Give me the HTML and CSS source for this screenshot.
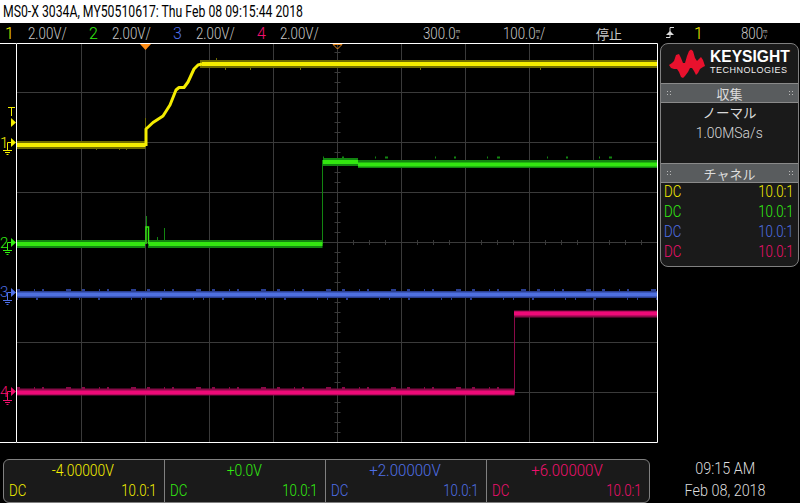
FILE: index.html
```html
<!DOCTYPE html>
<html lang="ja">
<head>
<meta charset="utf-8">
<title>MSO-X 3034A</title>
<link rel="stylesheet" href="styles.css">
</head>
<body>
<div class="screen">
  <header class="title"><span class="c cl title-text">MS0-X 3034A, MY50510617: Thu Feb 08 09:15:44 2018</span></header>

  <div class="status">
    <div class="ch-scale"><span class="num yellow">1</span><span class="val c cl">2.00V/</span></div>
    <div class="ch-scale"><span class="num green">2</span><span class="val c cl">2.00V/</span></div>
    <div class="ch-scale"><span class="num blue">3</span><span class="val c cl">2.00V/</span></div>
    <div class="ch-scale"><span class="num pink">4</span><span class="val c cl">2.00V/</span></div>
    <div class="time-delay"><span class="c cl">300.0<span class="stack"><i>m</i><i>s</i></span></span></div>
    <div class="time-scale"><span class="c cl">100.0<span class="stack"><i>m</i><i>s</i></span>/</span></div>
    <div class="run-state">停止</div>
    <svg class="edge" width="10" height="12" viewBox="0 0 10 12"><path class="edge-line" d="M9 0.500H5V10.500H1"/><path class="edge-head" d="M1 8H9L5 4Z"/></svg>
    <div class="trig-src yellow">1</div>
    <div class="trig-level"><span class="c cl">800<span class="stack"><i>m</i><i>V</i></span></span></div>
  </div>

  <div class="middle">
    <svg class="scope" width="658" height="400" viewBox="0 43 658 400">
      <path class="grid" d="M81.500 43V442M145.500 43V442M209.500 43V442M273.500 43V442M337.500 43V442M401.500 43V442M465.500 43V442M529.500 43V442M593.500 43V442M17 92.500H657M17 142.500H657M17 192.500H657M17 242.500H657M17 292.500H657M17 342.500H657M17 392.500H657"/>
      <path class="grid" d="M334.500 52.500h6M334.500 62.500h6M334.500 72.500h6M334.500 82.500h6M334.500 102.500h6M334.500 112.500h6M334.500 122.500h6M334.500 132.500h6M334.500 152.500h6M334.500 162.500h6M334.500 172.500h6M334.500 182.500h6M334.500 202.500h6M334.500 212.500h6M334.500 222.500h6M334.500 232.500h6M334.500 252.500h6M334.500 262.500h6M334.500 272.500h6M334.500 282.500h6M334.500 302.500h6M334.500 312.500h6M334.500 322.500h6M334.500 332.500h6M334.500 352.500h6M334.500 362.500h6M334.500 372.500h6M334.500 382.500h6M334.500 402.500h6M334.500 412.500h6M334.500 422.500h6M334.500 432.500h6"/>
      <path class="grid" d="M33.500 240v5M49.500 240v5M65.500 240v5M97.500 240v5M113.500 240v5M129.500 240v5M161.500 240v5M177.500 240v5M193.500 240v5M225.500 240v5M241.500 240v5M257.500 240v5M289.500 240v5M305.500 240v5M321.500 240v5M353.500 240v5M369.500 240v5M385.500 240v5M417.500 240v5M433.500 240v5M449.500 240v5M481.500 240v5M497.500 240v5M513.500 240v5M545.500 240v5M561.500 240v5M577.500 240v5M609.500 240v5M625.500 240v5M641.500 240v5"/>

      <!-- channel 1 -->
      <path class="dim-y band" d="M17 145H145.500M200 64H657"/>
      <path class="dim-y spike" d="M96.500 148v2M119.500 148v2M126.500 148v2M145.500 118v14M216.500 58v3M225.500 68v2M250.500 68v2M300.500 68v2M420.500 68v2M540.500 68v2"/>
      <path class="tr-y rise" d="M146 146V129L153 122.500L163 116L170 105L176 90L179 87.500H184L188 82L194 69L198 65L202 64"/>
      <path class="tr-y line" d="M17 145H145.500M202 64H657"/>

      <!-- channel 2 -->
      <path class="dim-g band-g" d="M17 244H145M148 244H322.500M323 162H358M358 164H657"/>
      <path class="dim-g thin" d="M322.500 160V244"/>
      <path class="dim-g noise-g" d="M323 157.500H657"/>
      <path class="dim-g spike" d="M146.500 216v14M164.500 228v12M157.500 237v4"/>
      <path class="tr-g thin-bright" d="M148.500 244V227H146V244"/>
      <path class="tr-g line" d="M17 244H145M149 244H322.500M323 162H358M358 164.500H657"/>

      <!-- channel 3 -->
      <path class="dim-b band-b" d="M17 294.500H657"/>
      <path class="dim-b noise" d="M17 290H657"/>
      <path class="dim-b noise2" d="M17 299H657"/>
      <path class="tr-b line" d="M17 294.500H657"/>

      <!-- channel 4 -->
      <path class="dim-p band-b" d="M17 392H514.500M514 314H657"/>
      <path class="dim-p thin" d="M514.500 314V392"/>
      <path class="dim-p noise" d="M17 388H514"/>
      <path class="tr-p line" d="M17 392.500H514.500M514 313.500H657"/>

      <!-- frame -->
      <path class="frame" d="M16.500 43.500H657.500V442.500H16.500ZM0 43.500H16M0 442.500H16"/>

      <!-- time reference markers -->
      <path class="mark-solid" d="M140 44H151L145.500 50Z"/>
      <path class="mark-hollow" d="M333 44.500H342L337.500 49Z"/>

      <!-- trigger level -->
      <path class="m-y" d="M8 107.500H15M11.500 108V116"/>
      <path class="f-y" d="M11 118L16 122.500L11 127Z"/>

      <!-- channel markers -->
      <g class="y"><text class="gnd-num" x="0" y="148">1</text><path class="gnd" d="M11 142.500H7.500V150.500M3 150.500H12M5 152.500H10M6.500 154.500H8.500"/><path class="head" d="M11 138L16 142.500L11 147Z"/></g>
      <g class="g"><text class="gnd-num" x="0" y="248">2</text><path class="gnd" d="M11 242.500H7.500V250.500M3 250.500H12M5 252.500H10M6.500 254.500H8.500"/><path class="head" d="M11 238L16 242.500L11 247Z"/></g>
      <g class="b"><text class="gnd-num" x="0" y="297">3</text><path class="gnd" d="M11 292.500H7.500V300.500M3 300.500H12M5 302.500H10M6.500 304.500H8.500"/><path class="head" d="M11 288L16 292.500L11 297Z"/></g>
      <g class="p"><text class="gnd-num" x="0" y="397">4</text><path class="gnd" d="M11 391.500H7.500V400.500M3 400.500H12M5 402.500H10M6.500 404.500H8.500"/><path class="head" d="M11 387L16 391.500L11 396Z"/></g>
    </svg>

    <aside class="side">
      <div class="logo">
        <svg class="wave" width="38" height="30" viewBox="667 48 38 30"><path class="wave-fill" d="M668 64L671 62L673 60L675 54L678 53L680 57L682 62L684 62L686 55L688 50L690 48.500L692 50L694 57L696 60L698 58L700 56L702 59L704 65L702 66L699 68L697 72L695 74L693 70L691 67L689 67L687 71L684 75L682 77L680 76L678 71L676 68L673 68L670 67Z"/></svg>
        <div class="brand">
          <div class="brand-top">KEYSIGHT</div>
          <div class="brand-sub">TECHNOLOGIES</div>
        </div>
      </div>
      <div class="sec-head"><span class="grip"></span><span>収集</span><span class="grip"></span></div>
      <div class="acq">
        <div>ノーマル</div>
        <div><span class="c wider">1.00MSa/s</span></div>
      </div>
      <div class="sec-head"><span class="grip"></span><span>チャネル</span><span class="grip"></span></div>
      <div class="chans">
        <div class="chan yellow"><span class="c cl">DC</span><span class="c cr">10.0:1</span></div>
        <div class="chan green"><span class="c cl">DC</span><span class="c cr">10.0:1</span></div>
        <div class="chan blue"><span class="c cl">DC</span><span class="c cr">10.0:1</span></div>
        <div class="chan pink"><span class="c cl">DC</span><span class="c cr">10.0:1</span></div>
      </div>
    </aside>
  </div>

  <footer class="bottom">
    <div class="offsets">
      <div class="off yellow"><div class="off-val"><span class="c wide">-4.00000V</span></div><div class="off-row"><span class="c cl">DC</span><span class="c cr">10.0:1</span></div></div>
      <div class="off green"><div class="off-val"><span class="c wide">+0.0V</span></div><div class="off-row"><span class="c cl">DC</span><span class="c cr">10.0:1</span></div></div>
      <div class="off blue"><div class="off-val"><span class="c plus">+2.00000V</span></div><div class="off-row"><span class="c cl">DC</span><span class="c cr">10.0:1</span></div></div>
      <div class="off pink"><div class="off-val"><span class="c plus">+6.00000V</span></div><div class="off-row"><span class="c cl">DC</span><span class="c cr">10.0:1</span></div></div>
    </div>
    <div class="clock"><div><span class="c wider">09:15 AM</span></div><div><span class="c wider">Feb 08, 2018</span></div></div>
  </footer>
</div>
</body>
</html>
```

FILE: styles.css
```css
* { box-sizing: border-box; }
html, body { margin: 0; padding: 0; background: #000; }
body { font-family: Roboto, "Noto Sans CJK JP", sans-serif; font-weight: 300; overflow: hidden; }
.screen { width: 800px; height: 503px; display: flex; flex-direction: column; background: #000; color: #ccc; }

.c { display: inline-block; transform: scaleX(0.83); white-space: nowrap; }
.cl { transform-origin: left center; }
.cr { transform-origin: right center; }
.title-text { transform: scaleX(0.765); }
.wide { transform: scaleX(0.87); }
.wider { transform: scaleX(0.9); }
.plus { transform: scaleX(0.94); }

.yellow { color: #f5f000; }
.green { color: #33ee11; }
.blue { color: #4f70e8; }
.pink { color: #f0106e; }

.title { height: 23px; background: #fff; color: #000; font-size: 16px; line-height: 23px; padding-left: 3px; white-space: nowrap; font-weight: 400; }

.status { height: 20px; display: flex; align-items: center; font-size: 16px; color: #c8c8c8; white-space: nowrap; }
.ch-scale { width: 84px; display: flex; padding-left: 5px; flex: none; }
.num { width: 23px; flex: none; }
.stack { display: inline-flex; flex-direction: column; vertical-align: middle; font-size: 6px; line-height: 6px; font-weight: 400; }
.stack i { font-style: normal; text-align: center; }
.time-delay { margin-left: 87px; width: 80px; }
.time-scale { width: 93px; }
.run-state { width: 69px; font-size: 13px; font-weight: 400; }
.edge { flex: none; margin-right: 19px; }
.edge-line { fill: none; stroke: #ddd; stroke-width: 1; }
.edge-head { fill: #ddd; }
.trig-src { width: 47px; }
.trig-level { width: 40px; }

.middle { height: 400px; display: flex; align-items: flex-start; }
.scope { display: block; flex: none; }
.grid { stroke: #3a3a3a; stroke-width: 1; fill: none; }
.frame { stroke: #fff; stroke-width: 1; fill: none; }
.line, .band, .band-g, .band-b, .noise, .noise2, .noise-g, .spike, .thin, .thin-bright, .rise { fill: none; }
.line { stroke-width: 4; }
.band { stroke-width: 8; }
.band-g { stroke-width: 8; }
.band-b { stroke-width: 7; }
.noise { stroke-width: 2; stroke-dasharray: 3 14 1 7 2 22 5 11; }
.noise2 { stroke-width: 2; stroke-dasharray: 1 18 2 31 1 9; }
.noise-g { stroke-width: 2; stroke-dasharray: 1 18 2 31 1 9 3 47; }
.spike { stroke-width: 1; }
.thin { stroke-width: 1; }
.thin-bright { stroke-width: 1.500; }
.rise { stroke-width: 3; stroke-linejoin: round; }
.dim-y { stroke: #6f6c00; }
.dim-g { stroke: #128510; }
.dim-b { stroke: #2a3e90; }
.dim-p { stroke: #8a0a48; }
.tr-y { stroke: #f4ec00; }
.tr-g { stroke: #33e610; }
.tr-b { stroke: #4f70e0; }
.tr-p { stroke: #ee0a78; }
.mark-solid { fill: #ff8c14; }
.mark-hollow { fill: none; stroke: #e88a20; stroke-width: 1; }
.m-y { stroke: #f5f000; stroke-width: 1; fill: none; }
.f-y { fill: #f5f000; }
.gnd-num { font-size: 15px; font-family: Roboto, sans-serif; font-weight: 300; }
.gnd { fill: none; stroke-width: 1; }
.y .gnd-num { fill: #f5f000; } .y .gnd { stroke: #f5f000; } .y .head { fill: #f5f000; }
.g .gnd-num { fill: #33ee11; } .g .gnd { stroke: #33ee11; } .g .head { fill: #33ee11; }
.b .gnd-num { fill: #4f70e8; } .b .gnd { stroke: #4f70e8; } .b .head { fill: #4f70e8; }
.p .gnd-num { fill: #f0106e; } .p .gnd { stroke: #f0106e; } .p .head { fill: #f0106e; }

.side { margin-left: 2px; width: 139px; height: 224px; flex: none; background: #1a1a1a; border: 1px solid #808080; border-radius: 8px; display: flex; flex-direction: column; color: #d8d8d8; overflow: hidden; }
.logo { height: 39px; display: flex; align-items: center; padding-left: 7px; gap: 4px; flex: none; }
.wave { display: block; flex: none; }
.wave-fill { fill: #e8112d; }
.brand { color: #fff; line-height: 1; font-family: "Liberation Sans", sans-serif; margin-top: -3px; }
.brand-top { font-size: 15.600px; font-weight: 700; }
.brand-sub { font-size: 9px; font-weight: 400; letter-spacing: 0.500px; margin-top: 2px; color: #eee; }
.sec-head { height: 20px; flex: none; background: #595c5e; border-top: 1px solid #8a8a8a; border-bottom: 1px solid #8a8a8a; display: flex; justify-content: space-between; align-items: center; padding: 0 5px; font-size: 13px; font-weight: 400; color: #ddd; }
.grip { width: 5px; height: 7px; background-image: radial-gradient(circle, #b8b8b8 0.7px, transparent 0.8px); background-size: 3px 3px; }
.acq { height: 60px; flex: none; text-align: center; font-size: 15.500px; line-height: 20px; }
.acq > div:first-child { font-size: 13.500px; font-weight: 400; }
.chans { flex: 1; padding: 0 4px 0 3px; }
.chan { display: flex; justify-content: space-between; height: 20px; line-height: 18px; font-size: 16px; }

.bottom { flex: 1; display: flex; padding: 16px 0 0 3px; }
.offsets { width: 647px; height: 44px; display: flex; background: #1a1a1a; border: 1px solid #808080; border-radius: 6px; flex: none; }
.off { width: 161px; flex: none; padding: 0 7px 0 5px; border-right: 1px solid #808080; font-size: 16px; }
.off:last-child { border-right: none; flex: 1; }
.off-val { height: 21px; line-height: 22px; text-align: center; }
.off-row { display: flex; justify-content: space-between; line-height: 20px; }
.clock { flex: 1; text-align: center; color: #ddd; font-size: 16px; line-height: 22px; margin-top: -1px; }
```
